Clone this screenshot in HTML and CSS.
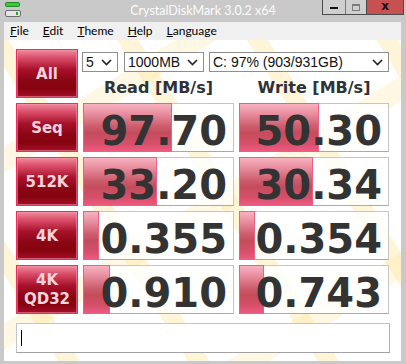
FILE: index.html
```html
<!DOCTYPE html>
<html>

    <head>
        <title>CrystalDiskMark 3.0.2 x64</title>
        <link rel="stylesheet" href="styles.css">
    </head>

    <body>
        <div class="ventana">
            <div class="barra-titulo">
                <svg class="icono-app" width="16" height="15" viewBox="0 0 16 15">
                    <rect x="0.5" y="0.5" width="14" height="4" rx="1" fill="#3cc83c" stroke="#1f8a1f"/>
                    <rect x="0.5" y="8.5" width="15" height="6" rx="1.5" fill="#e6e6e6" stroke="#6e6e6e"/>
                    <rect x="11" y="10" width="2" height="3" fill="#2aa52a"/>
                </svg>
                <div class="titulo">CrystalDiskMark 3.0.2 x64</div>
                <div class="botones-ventana">
                    <div class="btn-ventana minimizar"><span></span></div>
                    <div class="btn-ventana maximizar"><span></span></div>
                    <div class="btn-ventana cerrar">x</div>
                </div>
            </div>

            <div class="menu">
                <span><u>F</u>ile</span>
                <span><u>E</u>dit</span>
                <span><u>T</u>heme</span>
                <span><u>H</u>elp</span>
                <span><u>L</u>anguage</span>
            </div>

            <div class="cliente">
                <div class="tabla">
                    <div class="etiqueta">All</div>
                    <div class="cabecera">
                        <div class="selectores">
                            <div class="selector sel-veces">5<svg width="11" height="7" viewBox="0 0 11 7"><path d="M1 1 L5.5 5.5 L10 1" fill="none" stroke="#222" stroke-width="1.6"/></svg></div>
                            <div class="selector sel-tamano">1000MB<svg width="11" height="7" viewBox="0 0 11 7"><path d="M1 1 L5.5 5.5 L10 1" fill="none" stroke="#222" stroke-width="1.6"/></svg></div>
                            <div class="selector sel-unidad">C: 97% (903/931GB)<svg width="11" height="7" viewBox="0 0 11 7"><path d="M1 1 L5.5 5.5 L10 1" fill="none" stroke="#222" stroke-width="1.6"/></svg></div>
                        </div>
                        <div class="titulos-col">
                            <div>Read [MB/s]</div>
                            <div>Write [MB/s]</div>
                        </div>
                    </div>

                    <div class="etiqueta">Seq</div>
                    <div class="valor"><div class="barra" style="width: 89px;"></div><span>97.70</span></div>
                    <div class="valor"><div class="barra" style="width: 80px;"></div><span>50.30</span></div>

                    <div class="etiqueta">512K</div>
                    <div class="valor"><div class="barra" style="width: 74px;"></div><span>33.20</span></div>
                    <div class="valor"><div class="barra" style="width: 74px;"></div><span>30.34</span></div>

                    <div class="etiqueta">4K</div>
                    <div class="valor"><div class="barra" style="width: 16px;"></div><span>0.355</span></div>
                    <div class="valor"><div class="barra" style="width: 16px;"></div><span>0.354</span></div>

                    <div class="etiqueta doble">4K<br>QD32</div>
                    <div class="valor"><div class="barra" style="width: 27px;"></div><span>0.910</span></div>
                    <div class="valor"><div class="barra" style="width: 25px;"></div><span>0.743</span></div>
                </div>

                <div class="comentario"><span class="cursor"></span></div>
            </div>
        </div>
    </body>

</html>
```

FILE: styles.css
```css
html,
body {
    margin: 0;
    padding: 0;
    background-color: #c9c9c9;
}

.ventana {
    width: 406px;
    height: 364px;
    display: flex;
    flex-direction: column;
    background-color: #c9c9c9;
    overflow: hidden;
}

/* Barra de titulo */
.barra-titulo {
    height: 22px;
    display: grid;
    grid-template-columns: 1fr auto 1fr;
    align-items: start;
}

.icono-app {
    margin: 2px 0 0 5px;
}

.titulo {
    font-family: "Lato", "Liberation Sans", sans-serif;
    font-size: 12.5px;
    color: #fbfbfb;
    line-height: 21px;
}

.botones-ventana {
    justify-self: end;
    display: flex;
    margin-right: 2px;
    border: 1px solid #4a4a4a;
    border-top: none;
    height: 14px;
}

.btn-ventana {
    display: flex;
    align-items: center;
    justify-content: center;
    background-color: #cfcfcf;
}

.minimizar {
    width: 22px;
    border-right: 1px solid #777;
}

.minimizar span {
    width: 8px;
    height: 2px;
    margin-top: 2px;
    background-color: #111;
}

.maximizar {
    width: 20px;
    border-right: 1px solid #4a4a4a;
}

.maximizar span {
    width: 6px;
    height: 4px;
    border: 1px solid #7c7c7c;
    border-top-width: 2px;
}

.cerrar {
    width: 36px;
    background-color: #c75050;
    font-family: "DejaVu Sans", sans-serif;
    font-weight: bold;
    font-size: 12px;
    line-height: 12px;
    color: #111;
    padding-bottom: 2px;
    box-sizing: border-box;
}

/* Menu */
.menu {
    height: 18px;
    margin: 0 5px 0 4px;
    background-color: #f0f0f0;
    display: flex;
    gap: 14px;
    padding-left: 6px;
    font-family: "Lato", "Liberation Sans", sans-serif;
    font-size: 12px;
    line-height: 18px;
    color: #000;
}

/* Area del programa */
.cliente {
    flex: 1;
    margin: 0 5px 3px 4px;
    padding: 9px 0 0 12px;
    background-color: #fff;
    background-image:
        repeating-linear-gradient(58deg, rgba(255, 255, 255, 0) 0 46px, rgba(253, 228, 156, 0.4) 46px 64px, rgba(255, 255, 255, 0) 64px 110px),
        repeating-linear-gradient(-32deg, rgba(255, 255, 255, 0) 0 70px, rgba(253, 234, 176, 0.35) 70px 92px, rgba(255, 255, 255, 0) 92px 150px);
}

.tabla {
    display: grid;
    grid-template-columns: 62px 151px 150px;
    grid-auto-rows: 49px;
    column-gap: 5px;
    row-gap: 5px;
    width: 373px;
}

.etiqueta {
    box-sizing: border-box;
    display: flex;
    align-items: center;
    justify-content: center;
    text-align: center;
    border: 1px solid #e8305f;
    box-shadow: inset 0 0 0 1px rgba(250, 150, 170, 0.55);
    background: linear-gradient(#f08a9e 0%, #d84a66 18%, #a8102a 42%, #8a0614 65%, #86040f 82%, #a4102a 100%);
    font-family: "DejaVu Sans", sans-serif;
    font-weight: bold;
    font-size: 15px;
    color: #f9d3dc;
}

.etiqueta.doble {
    line-height: 19px;
    padding-top: 1px;
}

.cabecera {
    grid-column: 2 / 4;
}

.selectores {
    display: flex;
    margin: 3px 0 0 -1px;
}

.selector {
    box-sizing: border-box;
    height: 20px;
    display: flex;
    align-items: center;
    justify-content: space-between;
    padding: 0 5px 0 3px;
    background-color: #fff;
    border: 1px solid #8e8e8e;
    font-family: "Liberation Sans", sans-serif;
    font-size: 14px;
    color: #111;
}

.sel-veces {
    width: 36px;
    margin-right: 6px;
}

.sel-tamano {
    width: 80px;
    margin-right: 5px;
}

.sel-unidad {
    width: 180px;
}

.titulos-col {
    display: grid;
    grid-template-columns: 151px 150px;
    column-gap: 5px;
    padding-top: 5px;
    font-family: "DejaVu Sans", sans-serif;
    font-weight: bold;
    font-size: 16px;
    line-height: 22px;
    color: #30323a;
    text-align: center;
}

.valor {
    position: relative;
    box-sizing: border-box;
    border: 1px solid #c6c6c6;
    border-bottom-color: #a9a9a9;
    background-color: rgba(255, 255, 255, 0.82);
    text-align: right;
    padding: 7px 6px 0 0;
    font-family: "DejaVu Sans", sans-serif;
    font-weight: bold;
    font-size: 40px;
    line-height: 40px;
    color: #333;
}

.valor span {
    position: relative;
}

.barra {
    position: absolute;
    left: -1px;
    top: -1px;
    bottom: -1px;
    box-sizing: border-box;
    border: 1px solid #ea5f83;
    background: linear-gradient(#f7b3c0 0%, #eb93a4 18%, #cc5c6c 48%, #c44c5c 62%, #d8506c 85%, #ee5a80 100%);
}

.comentario {
    box-sizing: border-box;
    width: 374px;
    height: 30px;
    margin-top: 9px;
    background-color: #fff;
    border: 1px solid #c4c4c4;
    border-bottom-color: #a0a0a0;
    border-right-color: #b0b0b0;
    display: flex;
    align-items: center;
    padding-left: 4px;
}

.cursor {
    width: 1px;
    height: 16px;
    background-color: #000;
}
```
